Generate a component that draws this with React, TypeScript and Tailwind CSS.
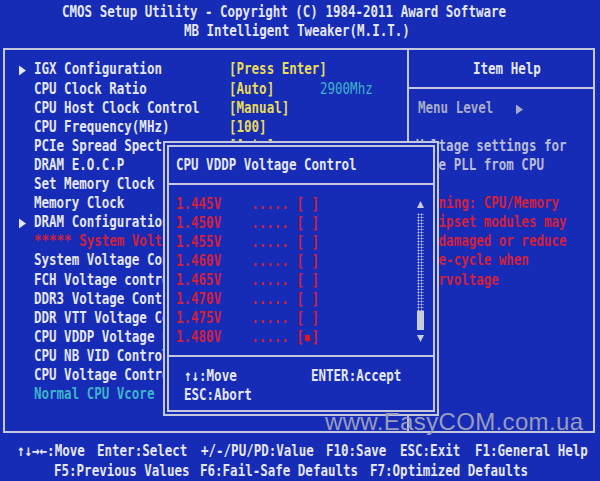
import React from "react";

const W = "text-[#e4e6f0]";
const Y = "text-[#e8dc58]";
const C = "text-[#3cb4c8]";
const R = "text-[#d0203e]";
const G = "text-[#a8acc8]";
const H = "text-[#b8bcd4]";

const TR = "h-[19.12px] flex items-center whitespace-pre scale-y-[1.25] translate-y-[1.5px]";

type Item = {
  label: string;
  value?: string;
  vc?: string;
  arrow?: boolean;
  color?: string;
  extra?: string;
};

const items: Item[] = [
  { label: "IGX Configuration", value: "[Press Enter]", vc: Y, arrow: true },
  { label: "CPU Clock Ratio", value: "[Auto]", vc: Y, extra: "2900Mhz" },
  { label: "CPU Host Clock Control", value: "[Manual]", vc: Y },
  { label: "CPU Frequency(MHz)", value: "[100]", vc: Y },
  { label: "PCIe Spread Spectrum", value: "[Auto]", vc: Y },
  { label: "DRAM E.O.C.P", value: "[Disabled]", vc: Y },
  { label: "Set Memory Clock", value: "[Auto]", vc: Y },
  { label: "Memory Clock", value: "X13.33 1333Mhz", vc: C },
  { label: "DRAM Configuration", value: "[Press Enter]", vc: Y, arrow: true },
  { label: "***** System Voltage Optimized *****", color: R },
  { label: "System Voltage Control", value: "[Manual]", vc: Y },
  { label: "FCH Voltage control", value: "[Auto]", vc: Y },
  { label: "DDR3 Voltage Control", value: "[Auto]", vc: Y },
  { label: "DDR VTT Voltage Control", value: "[Auto]", vc: Y },
  { label: "CPU VDDP Voltage Control", value: "[Auto]", vc: Y },
  { label: "CPU NB VID Control", value: "[Auto]", vc: Y },
  { label: "CPU Voltage Control", value: "[Auto]", vc: Y },
  { label: "Normal CPU Vcore", value: "1.400V", vc: C, color: C },
];

const options = ["1.445V", "1.450V", "1.455V", "1.460V", "1.465V", "1.470V", "1.475V", "1.480V"];

function Tri({ dir }: { dir: "right" | "up" | "down" }) {
  if (dir === "right")
    return (
      <svg width="7" height="8" viewBox="0 0 7 8">
        <path d="M0 0 L7 4 L0 8Z" fill="#e4e6f0" />
      </svg>
    );
  if (dir === "up")
    return (
      <svg width="7" height="7" viewBox="0 0 7 7">
        <path d="M3.5 0 L7 7 L0 7Z" fill="#c8cce0" />
      </svg>
    );
  return (
    <svg width="7" height="7" viewBox="0 0 7 7">
      <path d="M0 0 L7 0 L3.5 7Z" fill="#c8cce0" />
    </svg>
  );
}

function Line() {
  return (
    <div className="h-[19.12px] flex items-center">
      <div className="h-[2px] w-full bg-[#c4c8dc]" />
    </div>
  );
}

export default function App() {
  return (
    <div className="w-[600px] h-[481px] bg-[#162bb6] relative overflow-hidden text-[12.5px] font-bold font-['DejaVu_Sans_Mono',monospace] text-[#e4e6f0] leading-none">
      {/* header */}
      <div className="h-[48px] pt-[2px]">
        <div className={`${TR} pl-[62px]`}>CMOS Setup Utility - Copyright (C) 1984-2011 Award Software</div>
        <div className={`${TR} pl-[184px]`}>MB Intelligent Tweaker(M.I.T.)</div>
      </div>

      {/* main frame */}
      <div className="ml-[3px] w-[592px] h-[385px] border-2 border-[#c4c8dc] flex">
        {/* left panel */}
        <div className="w-[402px] pt-[9.4px]">
          {items.map((it, i) => (
            <div key={i} className={TR}>
              <div className="w-[14px] shrink-0" />
              <div className="w-[15px] shrink-0 flex items-center">{it.arrow && <Tri dir="right" />}</div>
              <div className={`w-[195px] shrink-0 ${it.color ?? W}`}>{it.label}</div>
              {it.value && (
                <div className={`${it.extra ? "w-[91px]" : ""} shrink-0 ${it.vc ?? Y}`}>{it.value}</div>
              )}
              {it.extra && <div className={`shrink-0 font-normal ${C}`}>{it.extra}</div>}
            </div>
          ))}
        </div>

        {/* right panel */}
        <div className="flex-1 border-l-2 border-[#c4c8dc] pt-[9.4px]">
          <div className={`${TR} pl-[64px]`}>Item Help</div>
          <Line />
          <div className={`${TR} pl-[9px] ${G}`}>
            {"Menu Level   "}
            <span className="inline-flex items-center">
              <svg width="7" height="8" viewBox="0 0 7 8">
                <path d="M0 0 L7 4 L0 8Z" fill="#a8acc8" />
              </svg>
            </span>
          </div>
          <div className="h-[19.12px]" />
          <div className={`${TR} pl-[7px] ${H}`}>Voltage settings for</div>
          <div className={`${TR} pl-[7px] ${H}`}> the PLL from CPU</div>
          <div className="h-[19.12px]" />
          {["Warning: CPU/Memory", " Chipset modules may", "be damaged or reduce", "life-cycle when", "overvoltage"].map((t, i) => (
            <div key={i} className={`${TR} pl-[7px] ${R}`}>
              {t}
            </div>
          ))}
        </div>
      </div>

      {/* bottom key help */}
      <div className="pt-[8.4px]">
        <div className={`${TR} pl-[17px]`}>
          <div className="w-[80px] shrink-0">↑↓→←:Move</div>
          <div className="w-[104px] shrink-0">Enter:Select</div>
          <div className="w-[125px] shrink-0">+/-/PU/PD:Value</div>
          <div className="w-[74px] shrink-0">F10:Save</div>
          <div className="w-[75px] shrink-0">ESC:Exit</div>
          <div className="shrink-0">F1:General Help</div>
        </div>
        <div className={`${TR} pl-[54px]`}>
          <div className="w-[146px] shrink-0">F5:Previous Values</div>
          <div className="w-[170px] shrink-0">F6:Fail-Safe Defaults</div>
          <div className="shrink-0">F7:Optimized Defaults</div>
        </div>
      </div>

      {/* popup dialog */}
      <div className="absolute left-[163px] top-[141px] w-[276px] h-[275px] border-2 border-[#c4c8dc] p-[2px] bg-[#162bb6]">
        <div className="h-full border-2 border-[#c4c8dc] pt-[8.4px]">
          <div className={`${TR} pl-[7px]`}>CPU VDDP Voltage Control</div>
          <Line />
          <div className="flex">
            <div className="flex-1">
              {options.map((o, i) => (
                <div key={o} className={`${TR} pl-[7px] ${R}`}>
                  {o + "    ..... ["}
                  <span className="inline-flex w-[7.53px] justify-center">
                    {i === options.length - 1 && <span className="block w-[5px] h-[5px] bg-[#e8141c]" />}
                  </span>
                  {"]"}
                </div>
              ))}
            </div>
            <div className="w-[7px] mr-[9px] flex flex-col">
              <div className="h-[19.12px] flex items-center justify-center translate-y-[1px]">
                <Tri dir="up" />
              </div>
              <div className="h-[98px] bg-[radial-gradient(circle,#c0c4dc_0.8px,transparent_1.2px)] bg-size-[3px_3px]" />
              <div className="h-[19px] bg-[#c8ccd8]" />
              <div className="flex-1 flex items-center justify-center">
                <Tri dir="down" />
              </div>
            </div>
          </div>
          <Line />
          <div className={`${TR} pl-[15px]`}>
            <div className="w-[127px] shrink-0">↑↓:Move</div>
            <div className="shrink-0">ENTER:Accept</div>
          </div>
          <div className={`${TR} pl-[15px]`}>ESC:Abort</div>
        </div>
      </div>

      {/* watermark */}
      <div className="absolute left-[325px] top-[410px] text-[24px] leading-[24px] font-normal tracking-[0.35px] font-['Liberation_Sans',Arial,sans-serif] text-[#989cbc] whitespace-pre">
        www.EasyCOM.com.ua
      </div>
    </div>
  );
}
